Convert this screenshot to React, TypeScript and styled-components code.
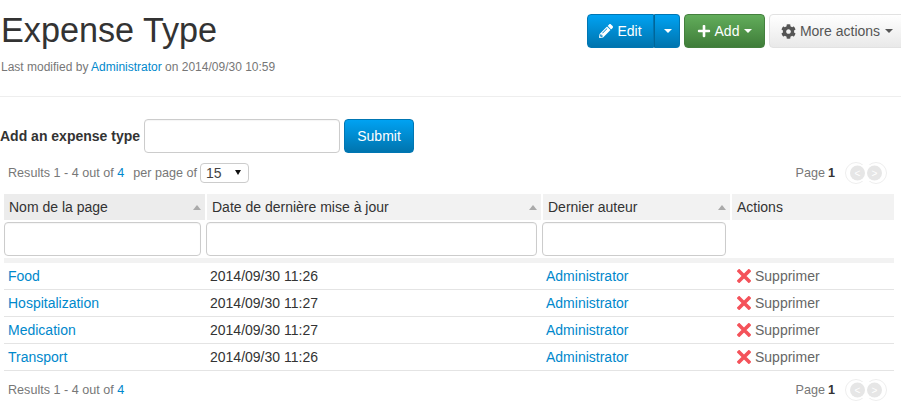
import React from "react";
import styled, { createGlobalStyle } from "styled-components";
import { FaPencilAlt, FaPlus, FaCog } from "react-icons/fa";

const Global = createGlobalStyle`
  html, body { margin: 0; padding: 0; background: #fff; }
  body { font-family: "Liberation Sans", Arial, sans-serif; font-size: 14px; line-height: 20px; color: #333; }
  * { box-sizing: border-box; }
`;
const Page = styled.div`width: 901px; height: 410px; overflow: hidden;`;
const Header = styled.header`
  display: flex; justify-content: space-between; align-items: flex-start;
  height: 97px; border-bottom: 1px solid #eee; padding-left: 1px;
`;
const Title = styled.h1`margin: 12px 0 0; font-size: 34.2px; line-height: 36px; font-weight: 400; color: #333;`;
const Meta = styled.div`margin-top: 11px; font-size: 12px; line-height: 17px; color: #777;`;
const Link = styled.a`color: #0088cc; text-decoration: none;`;
const Toolbar = styled.div`display: flex; gap: 4px; margin-top: 14px; width: 314px; flex-shrink: 0;`;
const Group = styled.div`display: flex;`;
const tones = {
  blue: "background: linear-gradient(#00a2f2, #0074ae); border-color: #0076b3; color: #fff;",
  green: "background: linear-gradient(#62ad5b, #3f7d39); border-color: #44803e; color: #fff;",
  plain: "background: linear-gradient(#fff, #e9e9e9); border-color: #e2e2e2; color: #555;",
} as const;
const Btn = styled.button<{ $tone: keyof typeof tones; $w: number; $side?: "l" | "r" }>`
  ${(p) => tones[p.$tone]}
  display: flex; align-items: center; justify-content: center; gap: 4px;
  width: ${(p) => p.$w}px; height: 34px; padding: 0;
  border-width: 1px; border-style: solid;
  border-radius: ${(p) => (p.$side === "l" ? "4px 0 0 4px" : p.$side === "r" ? "0 4px 4px 0" : "4px")};
  ${(p) => (p.$side === "r" ? "border-left-color: #006699;" : "")}
  font: 14px "Liberation Sans", Arial, sans-serif; flex-shrink: 0;
`;
const Caret = styled.span`
  display: inline-block; width: 0; height: 0; margin-left: 1px;
  border-top: 4px solid currentColor; border-left: 4px solid transparent; border-right: 4px solid transparent;
`;
const AddForm = styled.form`display: flex; align-items: center; margin-top: 21px;`;
const AddLabel = styled.label`font-weight: 700; font-size: 14px; margin-right: 4px;`;
const Input = styled.input<{ $w: number }>`
  display: block; width: ${(p) => p.$w}px; height: 34px; padding: 0 8px;
  border: 1px solid #ccc; border-radius: 4px; background: #fff; box-shadow: inset 0 1px 1px rgba(0,0,0,.04);
`;
const Submit = styled.button`
  width: 70px; height: 34px; margin-left: 4px; margin-top: 1px; padding: 0; color: #fff;
  background: linear-gradient(#00a2f2, #0074ae); border: 1px solid #0076b3; border-radius: 4px;
  font: 14px "Liberation Sans", Arial, sans-serif;
`;
const Pager = styled.div<{ $top: number }>`
  display: flex; justify-content: space-between; align-items: center;
  margin-top: ${(p) => p.$top}px; height: 22px; padding: 0 8px; font-size: 12.6px; color: #777;
`;
const Left = styled.div`display: flex; align-items: center;`;
const PerPage = styled.span`margin-left: 9px; margin-right: 3px;`;
const Sel = styled.div`
  position: relative; width: 49px; height: 20px; border: 1px solid #ccc; border-radius: 4px;
  font-size: 14px; line-height: 18px; padding-left: 5px; color: #444;
  &::after {
    content: ""; position: absolute; right: 7px; top: 6px;
    border-top: 5px solid #111; border-left: 3px solid transparent; border-right: 3px solid transparent;
  }
`;
const Right = styled.div`display: flex; align-items: center; margin-right: 6px;`;
const PageNum = styled.b`color: #333; margin-left: 3px; margin-right: 10px;`;
const NavText = styled.text`font: 10px "Liberation Sans", Arial, sans-serif; fill: #fff; text-anchor: middle;`;
const Wrap = styled.div`padding: 0 7px 0 4px; margin-top: 10px;`;
const Table = styled.table`width: 890px; border-collapse: separate; border-spacing: 0; table-layout: fixed; font-size: 14px;`;
const Th = styled.th<{ $w: number; $sort?: boolean; $active?: boolean }>`
  position: relative; width: ${(p) => p.$w}px; height: 26px; padding: 0 5px;
  background: ${(p) => (p.$active ? "#ececec" : "#f2f2f2")};
  border-left: 1px solid #fff; border-right: 1px solid #fff; text-align: left; font-weight: 400; color: #333;
  &:first-child { border-left: 0; }
  &:last-child { border-right: 0; }
  ${(p) => p.$sort ? `&::after {
    content: ""; position: absolute; right: 4px; top: 11px;
    border-bottom: 5px solid #aaa; border-left: 4px solid transparent; border-right: 4px solid transparent;
  }` : ""}
`;
const FilterCell = styled.td`padding: 2px 0; height: 38px; vertical-align: top;`;
const Band = styled.td`height: 5px; padding: 0; background: #f2f2f2;`;
const Td = styled.td<{ $pad?: number }>`
  height: 27px; padding: 0 0 0 ${(p) => p.$pad ?? 4}px; color: #333; border-bottom: 1px solid #e4e4e4;
`;
const Del = styled.span`display: flex; align-items: center; gap: 4px; color: #666; padding-left: 1px;`;

const Cross = () => (
  <svg width="14" height="14" viewBox="0 0 14 14" aria-hidden="true">
    <path d="M2.2 2.2 L11.8 11.8 M11.8 2.2 L2.2 11.8" stroke="#f4525a" strokeWidth="3.6" strokeLinecap="square" fill="none" />
  </svg>
);
const NavIcon = () => (
  <svg width="42" height="22" viewBox="0 0 42 22" aria-hidden="true">
    <circle cx="11" cy="11" r="10.5" fill="#fff" stroke="#eee" />
    <circle cx="31" cy="11" r="10.5" fill="#fff" stroke="#eee" />
    <rect x="11" y="3" width="20" height="16" fill="#fff" />
    <circle cx="12.5" cy="11" r="7.5" fill="#e6e6e6" />
    <circle cx="29.5" cy="11" r="7.5" fill="#e6e6e6" />
    <NavText x="12.5" y="14.5">&lt;</NavText>
    <NavText x="29.5" y="14.5">&gt;</NavText>
  </svg>
);
const rows: [string, string][] = [
  ["Food", "2014/09/30 11:26"],
  ["Hospitalization", "2014/09/30 11:27"],
  ["Medication", "2014/09/30 11:27"],
  ["Transport", "2014/09/30 11:26"],
];
const PageNav = () => (
  <Right>
    <span>Page</span>
    <PageNum>1</PageNum>
    <NavIcon />
  </Right>
);

export default function App() {
  return (
    <Page>
      <Global />
      <Header>
        <div>
          <Title>Expense Type</Title>
          <Meta>Last modified by <Link>Administrator</Link> on 2014/09/30 10:59</Meta>
        </div>
        <Toolbar>
          <Group>
            <Btn $tone="blue" $w={67} $side="l"><FaPencilAlt size={14} />Edit</Btn>
            <Btn $tone="blue" $w={26} $side="r"><Caret /></Btn>
          </Group>
          <Btn $tone="green" $w={81}><FaPlus size={14} />Add<Caret /></Btn>
          <Btn $tone="plain" $w={136}><FaCog size={15} />More actions<Caret /></Btn>
        </Toolbar>
      </Header>
      <AddForm>
        <AddLabel>Add an expense type</AddLabel>
        <Input $w={196} />
        <Submit type="button">Submit</Submit>
      </AddForm>
      <Pager $top={9}>
        <Left>
          <span>Results 1 - 4 out of <Link>4</Link></span>
          <PerPage>per page of</PerPage>
          <Sel>15</Sel>
        </Left>
        <PageNav />
      </Pager>
      <Wrap>
        <Table>
          <thead>
            <tr>
              <Th $w={202} $sort $active>Nom de la page</Th>
              <Th $w={336} $sort>Date de dernière mise à jour</Th>
              <Th $w={189} $sort>Dernier auteur</Th>
              <Th $w={163}>Actions</Th>
            </tr>
            <tr>
              <FilterCell><Input $w={197} /></FilterCell>
              <FilterCell><Input $w={331} /></FilterCell>
              <FilterCell><Input $w={184} /></FilterCell>
              <FilterCell />
            </tr>
            <tr><Band colSpan={4} /></tr>
          </thead>
          <tbody>
            {rows.map(([name, date]) => (
              <tr key={name}>
                <Td><Link>{name}</Link></Td>
                <Td>{date}</Td>
                <Td><Link>Administrator</Link></Td>
                <Td $pad={5}><Del><Cross />Supprimer</Del></Td>
              </tr>
            ))}
          </tbody>
        </Table>
      </Wrap>
      <Pager $top={8}>
        <Left><span>Results 1 - 4 out of <Link>4</Link></span></Left>
        <PageNav />
      </Pager>
    </Page>
  );
}
